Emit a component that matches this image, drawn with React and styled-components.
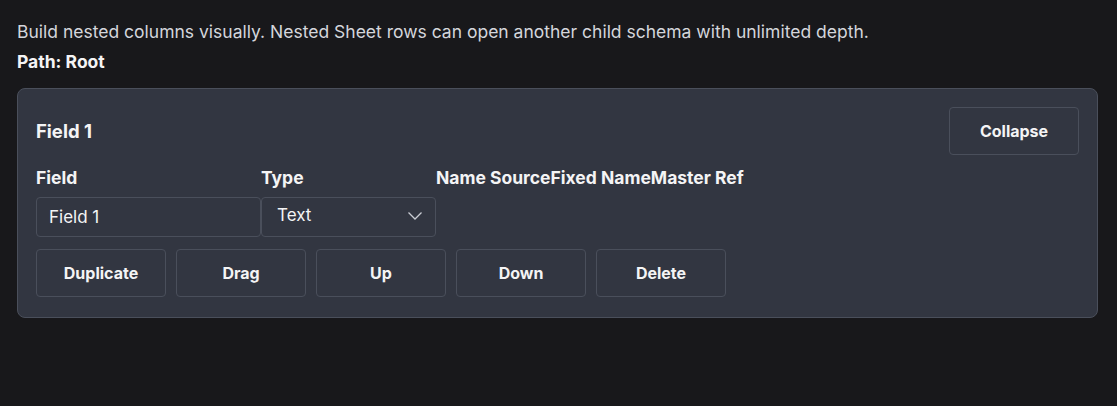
import React, { useState } from "react";
import styled, { createGlobalStyle } from "styled-components";

const GlobalStyle = createGlobalStyle`
  html, body {
    margin: 0;
    background: #18181b;
    font-family: Inter, "Noto Sans", sans-serif;
    color: #f4f4f5;
  }
`;

const App = () => {
  const [name, setName] = useState("Field 1");
  const [type, setType] = useState("Text");
  const actions = ["Duplicate", "Drag", "Up", "Down", "Delete"];

  return (
    <>
      <GlobalStyle />
      <Page>
        <Intro>
          Build nested columns visually. Nested Sheet rows can open another
          child schema with unlimited depth.
        </Intro>
        <PathLine>Path: Root</PathLine>

        <Card>
          <Header>
            <Title>Field 1</Title>
            <Btn>Collapse</Btn>
          </Header>

          <Grid>
            <Label>Field</Label>
            <Label>Type</Label>
            <Label>Name Source</Label>
            <Label>Fixed Name</Label>
            <Label>Master Ref</Label>

            <Input value={name} onChange={(e) => setName(e.target.value)} />
            <SelectWrap>
              <Select value={type} onChange={(e) => setType(e.target.value)}>
                <option>Text</option>
                <option>Number</option>
                <option>Sheet</option>
              </Select>
              <Chevron viewBox="0 0 16 10" width="16" height="10">
                <path
                  d="M1.5 1.5 L8 8 L14.5 1.5"
                  fill="none"
                  stroke="#c9ccd3"
                  strokeWidth="1.3"
                />
              </Chevron>
            </SelectWrap>
          </Grid>

          <Actions>
            {actions.map((a) => (
              <Btn key={a}>{a}</Btn>
            ))}
          </Actions>
        </Card>
      </Page>
    </>
  );
};
export default App;

const Page = styled.div`
  padding: 21px 19px 0 17px;
`;
const Intro = styled.p`
  margin: 0;
  font-size: 17.5px;
  line-height: 22px;
  color: #d4d6dc;
`;
const PathLine = styled.p`
  margin: 8px 0 0;
  font-size: 17.5px;
  line-height: 22px;
  font-weight: 700;
  color: #f4f4f5;
`;
const Card = styled.div`
  margin-top: 15px;
  background: #323641;
  border: 1px solid #4a4f5b;
  border-radius: 8px;
  padding: 18px 18px 20px;
`;
const Header = styled.div`
  display: flex;
  justify-content: space-between;
  align-items: center;
`;
const Title = styled.h2`
  margin: 0;
  font-size: 18.5px;
  font-weight: 700;
  color: #f4f4f5;
`;
const Btn = styled.button`
  width: 130px;
  height: 48px;
  background: #323641;
  border: 1px solid #4a4f5b;
  border-radius: 4px;
  color: #f4f4f5;
  font-family: Inter, "Noto Sans", sans-serif;
  font-size: 16px;
  font-weight: 700;
  cursor: pointer;
`;
const Grid = styled.div`
  margin-top: 12px;
  display: grid;
  grid-template-columns: 225px 175px auto auto auto;
  justify-content: start;
  row-gap: 8px;
`;
const Label = styled.label`
  font-size: 17.5px;
  line-height: 22px;
  font-weight: 700;
  color: #f4f4f5;
`;
const Input = styled.input`
  box-sizing: border-box;
  height: 40px;
  width: 225px;
  padding: 0 12px;
  background: #323641;
  border: 1px solid #4a4f5b;
  border-radius: 4px;
  color: #f4f4f5;
  font-family: Inter, "Noto Sans", sans-serif;
  font-size: 17px;
  outline: none;
`;
const SelectWrap = styled.div`
  position: relative;
  width: 175px;
`;
const Select = styled.select`
  appearance: none;
  box-sizing: border-box;
  width: 175px;
  height: 40px;
  padding: 0 40px 4px 15px;
  background: #323641;
  border: 1px solid #4a4f5b;
  border-radius: 4px;
  color: #f4f4f5;
  font-family: Inter, "Noto Sans", sans-serif;
  font-size: 17px;
  outline: none;
`;
const Chevron = styled.svg`
  position: absolute;
  right: 13px;
  top: 14px;
  pointer-events: none;
`;
const Actions = styled.div`
  margin-top: 12px;
  display: flex;
  gap: 10px;
`;
